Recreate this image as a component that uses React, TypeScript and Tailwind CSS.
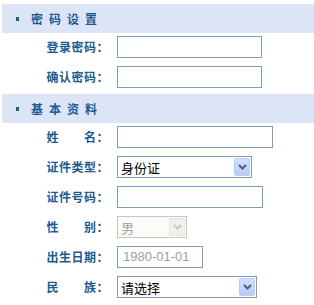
import React from "react";

const font = "font-['Noto_Sans_CJK_SC','Liberation_Sans',sans-serif]";

function SectionHeader({ title }: { title: string }) {
  return (
    <div className="ml-[2px] h-[29px] bg-[#dbe5f6] flex items-center pl-[14px]">
      <span className="w-[3px] h-[4px] bg-[#1e5a8e] mr-[12px]" />
      <span className="text-[12px] font-bold text-[#1e5a8e] tracking-[6px] leading-none">
        {title}
      </span>
    </div>
  );
}

function Row({ label, children }: { label: string; children: React.ReactNode }) {
  return (
    <div className="h-[30px] pt-[3px] flex items-start">
      <div className="w-[117px] h-[22px] pr-[8px] flex items-center justify-end text-[12px] font-bold text-[#1e5a8e] leading-none whitespace-pre tracking-[0.5px]">
        {label}
      </div>
      {children}
    </div>
  );
}

function TextBox({ width, value }: { width: number; value?: string }) {
  return (
    <div
      className="h-[22px] border border-[#7f9db9] bg-white flex items-center px-[5px] text-[13px] text-[#a0a0a0] font-['Liberation_Sans',sans-serif]"
      style={{ width }}
    >
      {value}
    </div>
  );
}

function Chevron({ color }: { color: string }) {
  return (
    <svg width="9" height="6" viewBox="0 0 9 6">
      <path d="M1 1 L4.5 4.5 L8 1" fill="none" stroke={color} strokeWidth="2" />
    </svg>
  );
}

function SelectBox({
  width,
  value,
  disabled,
}: {
  width: number;
  value: string;
  disabled?: boolean;
}) {
  return (
    <div
      className={`h-[22px] border flex items-center ${
        disabled ? "border-[#c9c7ba] bg-[#fbfbf9]" : "border-[#7f9db9] bg-white"
      }`}
      style={{ width }}
    >
      <span
        className={`flex-1 pl-[3px] text-[13px] leading-none ${
          disabled ? "text-[#a3a3a3]" : "text-black"
        }`}
      >
        {value}
      </span>
      <div
        className={`w-[16px] h-[18px] mr-[1px] rounded-[2px] border flex items-center justify-center ${
          disabled
            ? "border-[#e6e5de] bg-[#f1f0ea]"
            : "border-[#b9cdf7] bg-gradient-to-b from-[#d4e0fc] to-[#b6cbf7]"
        }`}
      >
        <Chevron color={disabled ? "#c9c8c0" : "#4b5e84"} />
      </div>
    </div>
  );
}

export default function App() {
  return (
    <div className={`w-[314px] h-[305px] bg-white pt-[4px] ${font}`}>
      <SectionHeader title="密码设置" />
      <Row label="登录密码：">
        <TextBox width={145} />
      </Row>
      <Row label="确认密码：">
        <TextBox width={145} />
      </Row>
      <div className="h-[1px]" />
      <SectionHeader title="基本资料" />
      <Row label="姓　　名：">
        <TextBox width={156} />
      </Row>
      <Row label="证件类型：">
        <SelectBox width={135} value="身份证" />
      </Row>
      <Row label="证件号码：">
        <TextBox width={146} />
      </Row>
      <Row label="性　　别：">
        <SelectBox width={70} value="男" disabled />
      </Row>
      <Row label="出生日期：">
        <TextBox width={86} value="1980-01-01" />
      </Row>
      <Row label="民　　族：">
        <SelectBox width={140} value="请选择" />
      </Row>
    </div>
  );
}
